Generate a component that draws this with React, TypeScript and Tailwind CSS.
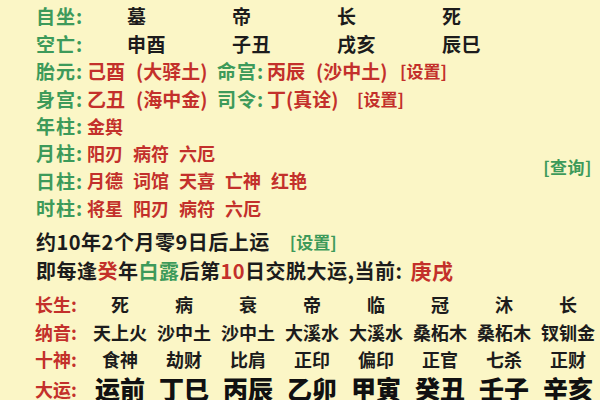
import React from 'react';

const G = 'text-[#3d9a5a]';
const R = 'text-[#c3302b]';

const zuo = ['墓', '帝', '长', '死'];
const kong = ['申酉', '子丑', '戌亥', '辰巳'];

const changSheng = ['死', '病', '衰', '帝', '临', '冠', '沐', '长'];
const naYin = ['天上火', '沙中土', '沙中土', '大溪水', '大溪水', '桑柘木', '桑柘木', '钗钏金'];
const shiShen = ['食神', '劫财', '比肩', '正印', '偏印', '正官', '七杀', '正财'];
const daYun = ['运前', '丁巳', '丙辰', '乙卯', '甲寅', '癸丑', '壬子', '辛亥'];

const pillars: { label: string; items: string[] }[] = [
  { label: '年柱:', items: ['金舆'] },
  { label: '月柱:', items: ['阳刃', '病符', '六厄'] },
  { label: '日柱:', items: ['月德', '词馆', '天喜', '亡神', '红艳'] },
  { label: '时柱:', items: ['将星', '阳刃', '病符', '六厄'] },
];

function Label({ text, w }: { text: string; w: string }) {
  return <span className={`${w} shrink-0 text-[19px] tracking-[1px] ${G}`}>{text}</span>;
}

function TopRow({ label, values }: { label: string; values: string[] }) {
  return (
    <div className="flex items-center h-[27.4px]">
      <Label text={label} w="w-[91px]" />
      {values.map((v, i) => (
        <span key={i} className="w-[105px] text-[19px] tracking-[0.5px] text-[#1c1c1c]">{v}</span>
      ))}
    </div>
  );
}

function TableRow({ label, values, size }: { label: string; values: string[]; size: string }) {
  return (
    <div className="flex items-center h-[27.5px]">
      <span className={`w-[53px] text-[18px] ${R}`}>{label}</span>
      {values.map((v, i) => (
        <span key={i} className={`w-[64px] text-center text-[#1c1c1c] whitespace-nowrap ${size}`}>{v}</span>
      ))}
    </div>
  );
}

export default function App() {
  return (
    <div
      className="w-[600px] h-[400px] overflow-hidden bg-[#fbf6c6] pl-[36px] pt-[2.3px] font-bold text-[18px] leading-none"
      style={{ fontFamily: '"Noto Sans CJK SC", "Noto Sans", sans-serif' }}
    >
      <TopRow label="自坐:" values={zuo} />
      <TopRow label="空亡:" values={kong} />

      <div className="flex items-center h-[27.4px] whitespace-nowrap text-[19px]">
        <Label text="胎元:" w="w-[51px]" />
        <span className={`w-[130px] ${R}`}>
          己酉<span className="ml-[11px]">(大驿土)</span>
        </span>
        <Label text="命宫:" w="w-[50px]" />
        <span className={`w-[133px] ${R}`}>
          丙辰<span className="ml-[11px]">(沙中土)</span>
        </span>
        <span className={`text-[17px] ${R}`}>[设置]</span>
      </div>
      <div className="flex items-center h-[27.4px] whitespace-nowrap text-[19px]">
        <Label text="身宫:" w="w-[51px]" />
        <span className={`w-[130px] ${R}`}>
          乙丑<span className="ml-[11px]">(海中金)</span>
        </span>
        <Label text="司令:" w="w-[50px]" />
        <span className={`w-[90px] ${R}`}>丁(真诠)</span>
        <span className={`text-[17px] ${R}`}>[设置]</span>
      </div>

      <div className="flex items-center pr-[8px]">
        <div className="flex-1">
          {pillars.map((p) => (
            <div key={p.label} className="flex items-center h-[27.4px] whitespace-nowrap">
              <Label text={p.label} w="w-[51px]" />
              {p.items.map((it, i) => (
                <span key={i} className={`mr-[10px] ${R}`}>{it}</span>
              ))}
            </div>
          ))}
        </div>
        <span className={`text-[17px] tracking-[0.5px] ${G}`}>[查询]</span>
      </div>

      <div className="flex items-center h-[29px] mt-[6px] text-[20px] text-[#1c1c1c] whitespace-nowrap">
        <span className="tracking-[0.5px]">约10年2个月零9日后上运</span>
        <span className={`ml-[20px] text-[17px] ${G}`}>[设置]</span>
      </div>
      <div className="flex items-center h-[29px] text-[20px] text-[#1c1c1c] whitespace-nowrap tracking-[0.5px]">
        <span>即每逢</span>
        <span className={R}>癸</span>
        <span>年</span>
        <span className={G}>白露</span>
        <span>后第</span>
        <span className={R}>10</span>
        <span>日交脱大运,当前:</span>
        <span className={`ml-[8px] text-[21px] ${R}`}>庚戌</span>
      </div>

      <div className="mt-[5px] -ml-[1px]">
        <TableRow label="长生:" values={changSheng} size="text-[18px]" />
        <TableRow label="纳音:" values={naYin} size="text-[18px]" />
        <TableRow label="十神:" values={shiShen} size="text-[18px]" />
        <div className="flex items-center h-[32px]">
          <span className={`w-[53px] text-[18px] ${R}`}>大运:</span>
          {daYun.map((v, i) => (
            <span key={i} className="w-[64px] text-center text-[#111] text-[25px] font-black whitespace-nowrap">{v}</span>
          ))}
        </div>
      </div>
    </div>
  );
}
